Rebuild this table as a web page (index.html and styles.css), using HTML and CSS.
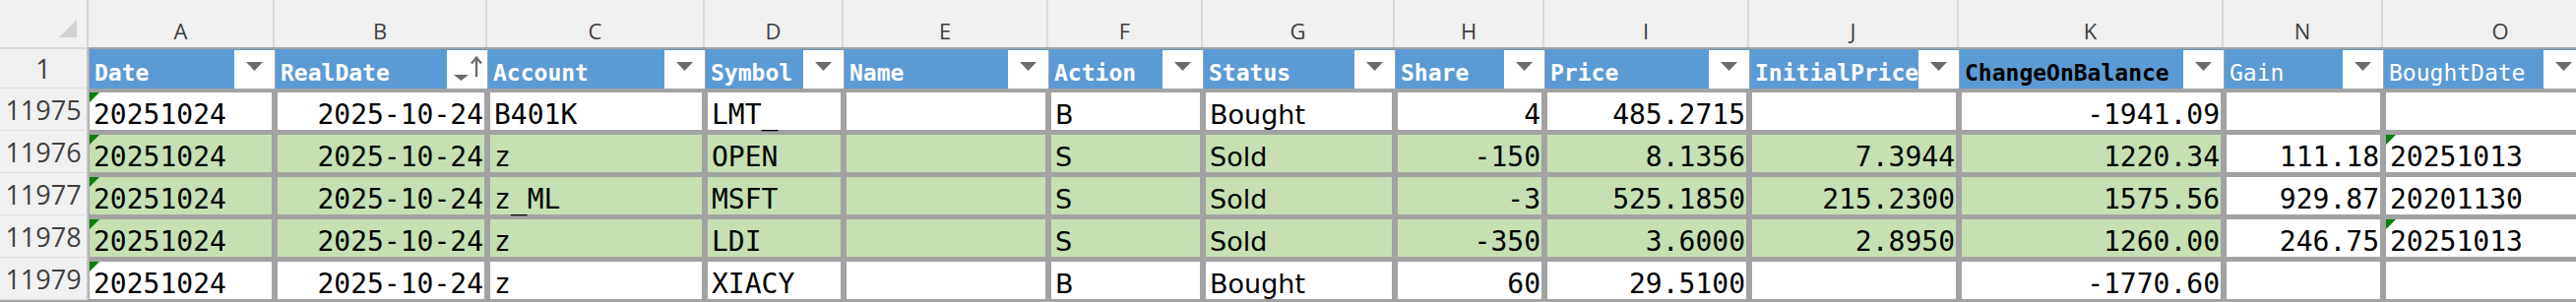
FILE: index.html
```html
<!DOCTYPE html>
<html lang="en">
<head>
<meta charset="utf-8">
<title>Trades</title>
<link rel="stylesheet" href="styles.css">
</head>
<body>
<div class="sheet">
  <div class="row colhead">
    <div class="corner"><span class="corner-tri"></span></div>
    <div class="col-letter">A</div>
    <div class="col-letter">B</div>
    <div class="col-letter">C</div>
    <div class="col-letter">D</div>
    <div class="col-letter">E</div>
    <div class="col-letter">F</div>
    <div class="col-letter">G</div>
    <div class="col-letter">H</div>
    <div class="col-letter">I</div>
    <div class="col-letter">J</div>
    <div class="col-letter">K</div>
    <div class="col-letter">N</div>
    <div class="col-letter">O</div>
  </div>

  <div class="row thead">
    <div class="rownum">1</div>
    <div class="th"><span class="th-label">Date</span><span class="dd"><svg width="41" height="39" viewBox="0 0 41 39"><polygon points="12,12 29,12 20.5,21" fill="#6b6b6b"/></svg></span></div>
    <div class="th"><span class="th-label">RealDate</span><span class="dd"><svg width="41" height="39" viewBox="0 0 41 39"><polygon points="7,25 22,25 14.5,31" fill="#6b6b6b"/><line x1="30" y1="8" x2="30" y2="27" stroke="#6b6b6b" stroke-width="2.4"/><polyline points="25,13.5 30,7.5 35,13.5" fill="none" stroke="#6b6b6b" stroke-width="2.4"/></svg></span></div>
    <div class="th"><span class="th-label">Account</span><span class="dd"><svg width="41" height="39" viewBox="0 0 41 39"><polygon points="12,12 29,12 20.5,21" fill="#6b6b6b"/></svg></span></div>
    <div class="th"><span class="th-label">Symbol</span><span class="dd"><svg width="41" height="39" viewBox="0 0 41 39"><polygon points="12,12 29,12 20.5,21" fill="#6b6b6b"/></svg></span></div>
    <div class="th"><span class="th-label">Name</span><span class="dd"><svg width="41" height="39" viewBox="0 0 41 39"><polygon points="12,12 29,12 20.5,21" fill="#6b6b6b"/></svg></span></div>
    <div class="th"><span class="th-label">Action</span><span class="dd"><svg width="41" height="39" viewBox="0 0 41 39"><polygon points="12,12 29,12 20.5,21" fill="#6b6b6b"/></svg></span></div>
    <div class="th"><span class="th-label">Status</span><span class="dd"><svg width="41" height="39" viewBox="0 0 41 39"><polygon points="12,12 29,12 20.5,21" fill="#6b6b6b"/></svg></span></div>
    <div class="th"><span class="th-label">Share</span><span class="dd"><svg width="41" height="39" viewBox="0 0 41 39"><polygon points="12,12 29,12 20.5,21" fill="#6b6b6b"/></svg></span></div>
    <div class="th"><span class="th-label">Price</span><span class="dd"><svg width="41" height="39" viewBox="0 0 41 39"><polygon points="12,12 29,12 20.5,21" fill="#6b6b6b"/></svg></span></div>
    <div class="th"><span class="th-label">InitialPrice</span><span class="dd"><svg width="41" height="39" viewBox="0 0 41 39"><polygon points="12,12 29,12 20.5,21" fill="#6b6b6b"/></svg></span></div>
    <div class="th th-dark"><span class="th-label">ChangeOnBalance</span><span class="dd"><svg width="41" height="39" viewBox="0 0 41 39"><polygon points="12,12 29,12 20.5,21" fill="#6b6b6b"/></svg></span></div>
    <div class="th th-light"><span class="th-label">Gain</span><span class="dd"><svg width="41" height="39" viewBox="0 0 41 39"><polygon points="12,12 29,12 20.5,21" fill="#6b6b6b"/></svg></span></div>
    <div class="th th-light th-narrow"><span class="th-label">BoughtDate</span><span class="dd"><svg width="41" height="39" viewBox="0 0 41 39"><polygon points="12,12 29,12 20.5,21" fill="#6b6b6b"/></svg></span></div>
  </div>

  <div class="row data">
    <div class="rownum">11975</div>
    <div class="td first tri">20251024</div>
    <div class="td r">2025-10-24</div>
    <div class="td">B401K</div>
    <div class="td">LMT_</div>
    <div class="td"></div>
    <div class="td prop">B</div>
    <div class="td prop">Bought</div>
    <div class="td r">4</div>
    <div class="td r">485.2715</div>
    <div class="td r"></div>
    <div class="td r">-1941.09</div>
    <div class="td r"></div>
    <div class="td"></div>
  </div>

  <div class="row data">
    <div class="rownum">11976</div>
    <div class="td first g tri">20251024</div>
    <div class="td g r">2025-10-24</div>
    <div class="td g">z</div>
    <div class="td g">OPEN</div>
    <div class="td g"></div>
    <div class="td g prop">S</div>
    <div class="td g prop">Sold</div>
    <div class="td g r">-150</div>
    <div class="td g r">8.1356</div>
    <div class="td g r">7.3944</div>
    <div class="td g r">1220.34</div>
    <div class="td r">111.18</div>
    <div class="td tri">20251013</div>
  </div>

  <div class="row data">
    <div class="rownum">11977</div>
    <div class="td first g tri">20251024</div>
    <div class="td g r">2025-10-24</div>
    <div class="td g">z_ML</div>
    <div class="td g">MSFT</div>
    <div class="td g"></div>
    <div class="td g prop">S</div>
    <div class="td g prop">Sold</div>
    <div class="td g r">-3</div>
    <div class="td g r">525.1850</div>
    <div class="td g r">215.2300</div>
    <div class="td g r">1575.56</div>
    <div class="td r">929.87</div>
    <div class="td">20201130</div>
  </div>

  <div class="row data">
    <div class="rownum">11978</div>
    <div class="td first g tri">20251024</div>
    <div class="td g r">2025-10-24</div>
    <div class="td g">z</div>
    <div class="td g">LDI</div>
    <div class="td g"></div>
    <div class="td g prop">S</div>
    <div class="td g prop">Sold</div>
    <div class="td g r">-350</div>
    <div class="td g r">3.6000</div>
    <div class="td g r">2.8950</div>
    <div class="td g r">1260.00</div>
    <div class="td r">246.75</div>
    <div class="td tri">20251013</div>
  </div>

  <div class="row data">
    <div class="rownum">11979</div>
    <div class="td first tri">20251024</div>
    <div class="td r">2025-10-24</div>
    <div class="td">z</div>
    <div class="td">XIACY</div>
    <div class="td"></div>
    <div class="td prop">B</div>
    <div class="td prop">Bought</div>
    <div class="td r">60</div>
    <div class="td r">29.5100</div>
    <div class="td r"></div>
    <div class="td r">-1770.60</div>
    <div class="td r"></div>
    <div class="td"></div>
  </div>
</div>
</body>
</html>
```

FILE: styles.css
```css
html, body {
  margin: 0;
  padding: 0;
}

body {
  width: 2617px;
  height: 307px;
  overflow: hidden;
  background: #a2a2a2;
}

.sheet {
  --cols: 90px 189px 216px 221px 141px 208px 157px 195px 152px 208px 213px 269px 162px 240px;
  width: 2661px;
  background: #a2a2a2;
}

.row {
  display: grid;
  grid-template-columns: var(--cols);
}

/* column letters */
.colhead {
  height: 48px;
  background: #f0f0f0;
}

.corner {
  display: flex;
  justify-content: flex-end;
  align-items: flex-end;
  padding: 0 10px 10px 0;
  border-right: 2px solid #d4d4d4;
}

.corner-tri {
  width: 0;
  height: 0;
  border-left: 18px solid transparent;
  border-bottom: 18px solid #d2d2d2;
}

.col-letter {
  border-right: 2px solid #dadada;
  text-align: center;
  padding-top: 16px;
  font-family: "Open Sans", "DejaVu Sans", sans-serif;
  font-size: 22px;
  line-height: normal;
  color: #3e3e3e;
}

/* row numbers */
.rownum {
  background: #f0f0f0;
  border-right: 2px solid #c4c4c4;
  border-bottom: 1px solid #dcdcdc;
  display: flex;
  align-items: center;
  justify-content: center;
  font-family: "Open Sans", "DejaVu Sans", sans-serif;
  font-size: 27px;
  color: #404040;
}

/* header row */
.thead {
  height: 42px;
}

.thead .rownum {
  border-top: 2px solid #d8d8d8;
}

.th {
  display: flex;
  margin: 2px 0 0 1px;
  height: 40px;
  background: #5b9bd5;
  overflow: hidden;
}

.th-label {
  flex: 1 1 auto;
  min-width: 0;
  white-space: nowrap;
  padding: 11px 0 0 5px;
  font-family: "DejaVu Sans Mono", monospace;
  font-weight: bold;
  font-size: 23px;
  line-height: 26px;
  color: #ffffff;
}

.th-dark .th-label {
  color: #000000;
}

.th-light .th-label {
  font-weight: normal;
}

.th-narrow .th-label {
  flex: 0 0 157px;
}

.dd {
  flex: 0 0 41px;
  margin-top: 1px;
  height: 39px;
  background: #ffffff;
}

.dd svg {
  display: block;
}

/* data rows */
.data {
  height: 43px;
}

.td {
  position: relative;
  margin: 4px 3px 1px 3px;
  height: 38px;
  box-sizing: border-box;
  padding: 7px 1px 0 4px;
  background: #ffffff;
  font-family: "DejaVu Sans Mono", monospace;
  font-size: 28px;
  line-height: 31px;
  color: #000000;
  white-space: nowrap;
  overflow-x: clip;
  overflow-y: visible;
}

.td.first {
  margin-left: 1px;
}

.td.r {
  text-align: right;
}

.td.g {
  background: #c6e0b4;
}

.td.prop {
  font-family: "DejaVu Sans", sans-serif;
  font-size: 27px;
  padding-left: 4px;
}

.td.tri::before {
  content: "";
  position: absolute;
  top: 0;
  left: 0;
  width: 0;
  height: 0;
  border-top: 10px solid #0b7d0b;
  border-right: 10px solid transparent;
}
```
